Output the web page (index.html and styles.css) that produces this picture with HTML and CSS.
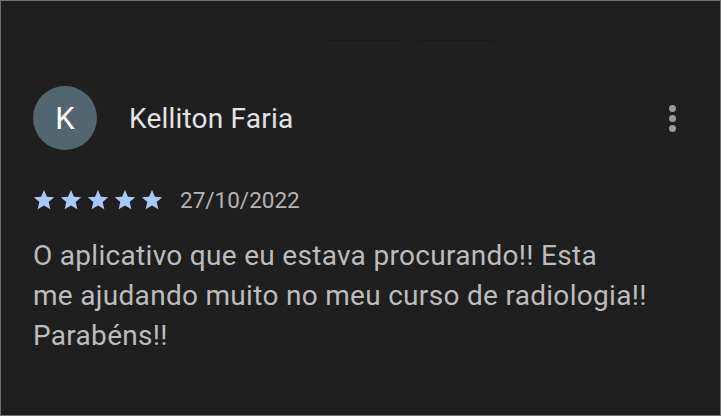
FILE: index.html
```html
<!DOCTYPE html>
<html lang="pt">
<head>
<meta charset="utf-8">
<link rel="stylesheet" href="styles.css">
</head>
<body>
<div class="frame">
  <div class="ghost">
    <span class="ghost-line g1"></span>
    <span class="ghost-line g2"></span>
  </div>
  <div class="review">
    <div class="header">
      <div class="avatar">K</div>
      <div class="name">Kelliton Faria</div>
      <div class="menu"><span></span><span></span><span></span></div>
    </div>
    <div class="meta">
      <div class="stars">
        <svg viewBox="0 0 24 24"><path d="M12 2l2.95 6.7 7.25.62-5.5 4.78 1.64 7.1L12 17.45 5.66 21.2l1.64-7.1-5.5-4.78 7.25-.62z"/></svg>
        <svg viewBox="0 0 24 24"><path d="M12 2l2.95 6.7 7.25.62-5.5 4.78 1.64 7.1L12 17.45 5.66 21.2l1.64-7.1-5.5-4.78 7.25-.62z"/></svg>
        <svg viewBox="0 0 24 24"><path d="M12 2l2.95 6.7 7.25.62-5.5 4.78 1.64 7.1L12 17.45 5.66 21.2l1.64-7.1-5.5-4.78 7.25-.62z"/></svg>
        <svg viewBox="0 0 24 24"><path d="M12 2l2.95 6.7 7.25.62-5.5 4.78 1.64 7.1L12 17.45 5.66 21.2l1.64-7.1-5.5-4.78 7.25-.62z"/></svg>
        <svg viewBox="0 0 24 24"><path d="M12 2l2.95 6.7 7.25.62-5.5 4.78 1.64 7.1L12 17.45 5.66 21.2l1.64-7.1-5.5-4.78 7.25-.62z"/></svg>
      </div>
      <span class="date">27/10/2022</span>
    </div>
    <p class="text">O aplicativo que eu estava procurando!! Esta<br>me ajudando muito no meu curso de radiologia!!<br>Parabéns!!</p>
  </div>
</div>
</body>
</html>
```
FILE: styles.css
```css
html, body {
  margin: 0;
  padding: 0;
  background: #1f1f1f;
}
.frame {
  box-sizing: border-box;
  width: 721px;
  height: 416px;
  border: 1px solid #6e6e6e;
  background: #1f1f1f;
  font-family: Roboto, "Noto Sans", sans-serif;
  display: flex;
  flex-direction: column;
}
.ghost {
  height: 40px;
  display: flex;
  align-items: flex-end;
  padding-left: 326px;
  gap: 18px;
}
.ghost-line {
  display: block;
  height: 1px;
  background: #191919;
}
.g1 { width: 73px; }
.g2 { width: 76px; }
.review {
  padding: 45px 0 0 32px;
  display: flex;
  flex-direction: column;
}
.header {
  display: flex;
  align-items: center;
  height: 64px;
}
.avatar {
  width: 64px;
  height: 64px;
  border-radius: 50%;
  background: #51666f;
  color: #ffffff;
  font-size: 31px;
  display: flex;
  align-items: center;
  justify-content: center;
  flex-shrink: 0;
}
.name {
  margin-left: 32px;
  color: #e3e3e3;
  font-size: 28px;
  letter-spacing: 0.2px;
  flex: 1;
}
.menu {
  width: 8px;
  margin-right: 44px;
  display: flex;
  flex-direction: column;
  align-items: center;
  gap: 3px;
}
.menu span {
  width: 7px;
  height: 7px;
  border-radius: 50%;
  background: #9a9a9a;
}
.meta {
  margin-top: 36px;
  display: flex;
  align-items: center;
  height: 28px;
  margin-left: -1px;
}
.stars {
  display: flex;
  gap: 3px;
}
.stars svg {
  width: 24px;
  height: 24px;
  fill: #a8c7fa;
}
.date {
  margin-left: 16px;
  color: #b4b4b4;
  font-size: 22.5px;
}
.text {
  margin: 22px 0 0 0;
  color: #bcbcbc;
  font-size: 28px;
  letter-spacing: 0.3px;
  line-height: 40px;
}
```
